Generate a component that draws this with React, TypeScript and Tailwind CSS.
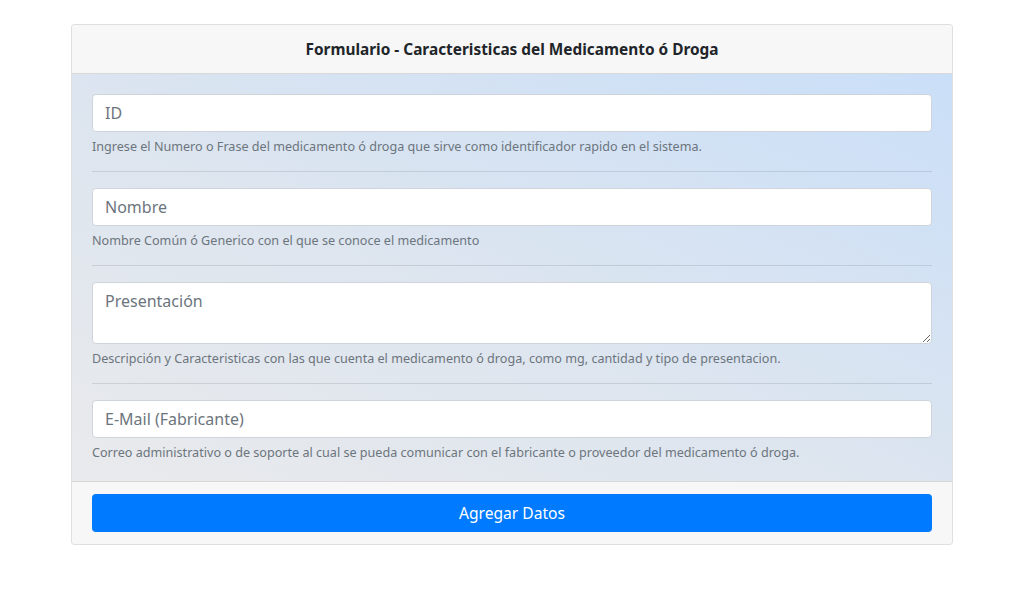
import React from "react";

const font = { fontFamily: '"Noto Sans", "Open Sans", sans-serif' };

function Help({ children }: { children: React.ReactNode }) {
  return <small className="block mt-[5px] text-[12.6px] leading-[19px] text-[#6c757d]">{children}</small>;
}

export default function App() {
  return (
    <div className="w-[1024px] h-[600px] bg-white pt-6" style={font}>
      <div className="w-[882px] ml-[71px] border border-[rgba(0,0,0,0.125)] rounded bg-white overflow-hidden">
        <div className="bg-[#f7f7f7] border-b border-[rgba(0,0,0,0.125)] px-5 pt-[13px] pb-[11px] text-center text-[#212529] font-bold text-[15.4px] leading-6">
          Formulario - Caracteristicas del Medicamento ó Droga
        </div>
        <div className="px-5 pt-5 pb-[19px] bg-[linear-gradient(to_top_right,#e9eaec_0%,#dde5ef_45%,#cadff8_100%)]">
          <div>
            <input
              className="block w-full h-[38px] px-3 bg-white border border-[#ced4da] rounded text-base placeholder:text-[#6c757d] outline-none"
              placeholder="ID"
            />
            <Help>Ingrese el Numero o Frase del medicamento ó droga que sirve como identificador rapido en el sistema.</Help>
          </div>
          <div className="mt-[15px] mb-4 h-px bg-[rgba(0,0,0,0.1)]" />
          <div>
            <input
              className="block w-full h-[38px] px-3 bg-white border border-[#ced4da] rounded text-base placeholder:text-[#6c757d] outline-none"
              placeholder="Nombre"
            />
            <Help>Nombre Común ó Generico con el que se conoce el medicamento</Help>
          </div>
          <div className="mt-[15px] mb-4 h-px bg-[rgba(0,0,0,0.1)]" />
          <div>
            <textarea
              className="block w-full h-[62px] px-3 py-[6px] bg-white border border-[#ced4da] rounded text-base leading-6 placeholder:text-[#6c757d] outline-none"
              placeholder="Presentación"
            />
            <Help>Descripción y Caracteristicas con las que cuenta el medicamento ó droga, como mg, cantidad y tipo de presentacion.</Help>
          </div>
          <div className="mt-[15px] mb-4 h-px bg-[rgba(0,0,0,0.1)]" />
          <div>
            <input
              className="block w-full h-[38px] px-3 bg-white border border-[#ced4da] rounded text-base placeholder:text-[#6c757d] outline-none"
              placeholder="E-Mail (Fabricante)"
            />
            <Help>Correo administrativo o de soporte al cual se pueda comunicar con el fabricante o proveedor del medicamento ó droga.</Help>
          </div>
        </div>
        <div className="bg-[#f7f7f7] border-t border-[rgba(0,0,0,0.125)] px-5 py-3">
          <button className="block w-full h-[38px] pt-[2px] rounded bg-[#007bff] text-white text-[15.6px]">Agregar Datos</button>
        </div>
      </div>
    </div>
  );
}
